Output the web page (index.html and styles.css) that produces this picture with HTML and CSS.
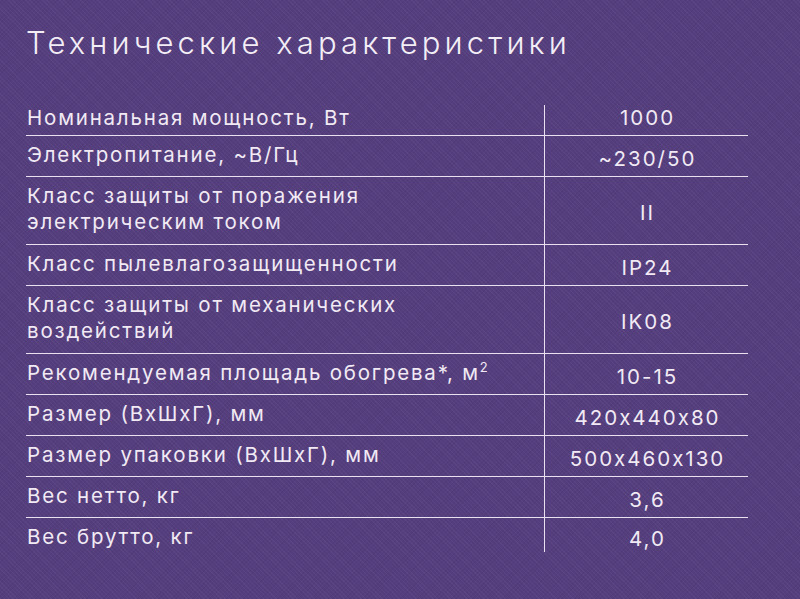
FILE: index.html
```html
<!DOCTYPE html>
<html lang="ru">
<head>
<meta charset="utf-8">
<title>Технические характеристики</title>
<link rel="stylesheet" href="styles.css">
</head>
<body>
<div class="page">
  <h1 class="title">Технические характеристики</h1>
  <div class="specs">
    <div class="row first"><div class="label">Номинальная мощность, Вт</div><div class="value">1000</div></div>
    <div class="row"><div class="label">Электропитание, ~В/Гц</div><div class="value">~230/50</div></div>
    <div class="row double"><div class="label">Класс защиты от поражения<br>электрическим током</div><div class="value">II</div></div>
    <div class="row"><div class="label">Класс пылевлагозащищенности</div><div class="value">IP24</div></div>
    <div class="row double"><div class="label">Класс защиты от механических<br>воздействий</div><div class="value">IK08</div></div>
    <div class="row"><div class="label">Рекомендуемая площадь обогрева*, м<sup>2</sup></div><div class="value">10-15</div></div>
    <div class="row"><div class="label">Размер (ВхШхГ), мм</div><div class="value">420x440x80</div></div>
    <div class="row"><div class="label">Размер упаковки (ВхШхГ), мм</div><div class="value">500x460x130</div></div>
    <div class="row"><div class="label">Вес нетто, кг</div><div class="value">3,6</div></div>
    <div class="row last"><div class="label">Вес брутто, кг</div><div class="value">4,0</div></div>
  </div>
</div>
</body>
</html>
```

FILE: styles.css
```css
html, body {
  margin: 0;
  padding: 0;
}
body {
  width: 800px;
  height: 599px;
  overflow: hidden;
  background-color: #553e7e;
  background-image:
    repeating-linear-gradient(45deg, rgba(255,255,255,0.035) 0 1px, transparent 1px 3px),
    repeating-linear-gradient(-45deg, rgba(0,0,0,0.05) 0 1px, transparent 1px 3px);
  color: #f1eaf4;
  font-family: Inter, "Liberation Sans", Arial, sans-serif;
}
.page {
  padding: 23px 0 0 26px;
}
.title {
  margin: 0;
  font-weight: 300;
  font-size: 31px;
  line-height: 40px;
  letter-spacing: 4.1px;
  color: #f3eef6;
}
.specs {
  margin-top: 42px;
  width: 722px;
}
.row {
  display: grid;
  grid-template-columns: 518px 1fr;
  border-bottom: 1.5px solid #e9e1ef;
}
.row.last {
  border-bottom: none;
}
.label {
  font-size: 20.5px;
  line-height: 26px;
  letter-spacing: 1.8px;
  padding: 6px 0 8px 1px;
  white-space: nowrap;
}
.row.double .label {
  padding-bottom: 9px;
}
.row.first .label {
  padding: 0 0 4px 1px;
}
.row.last .label {
  padding-bottom: 2px;
}
.label sup {
  font-size: 13px;
  line-height: 0;
  letter-spacing: 0;
  vertical-align: 8px;
}
.value {
  display: flex;
  align-items: center;
  justify-content: center;
  border-left: 1.5px solid #e9e1ef;
  font-size: 20.5px;
  line-height: 26px;
  letter-spacing: 2px;
  padding: 9px 0 4px 2px;
}
.row.first .value {
  padding: 0 0 4px 2px;
}
.row.last .value {
  padding: 8px 0 0 2px;
}
```
